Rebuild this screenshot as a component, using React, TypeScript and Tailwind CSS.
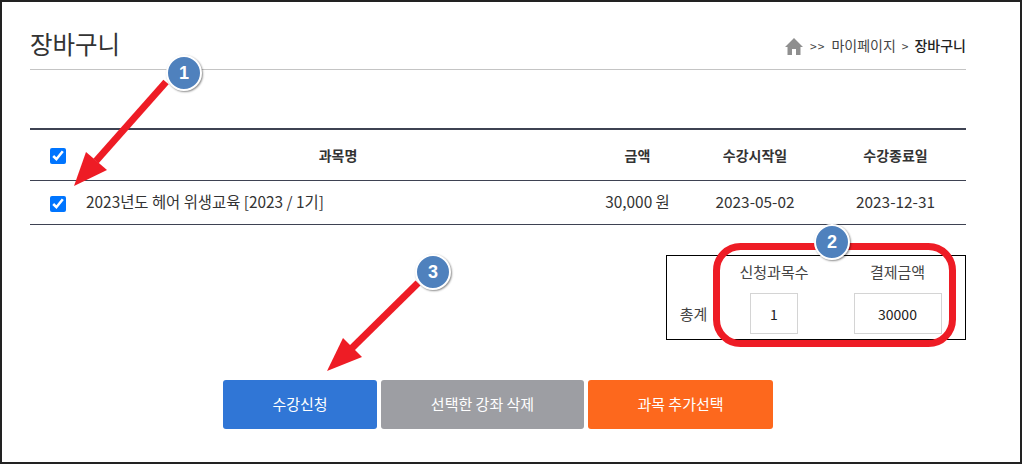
import React from 'react';

const font = '[font-family:"Noto_Sans_CJK_KR","Noto_Sans",sans-serif]';

function Callout({ n, className }: { n: number; className: string }) {
  return (
    <div
      className={`absolute flex h-[36px] w-[36px] items-center justify-center rounded-full border-2 border-white bg-[#4f81bd] text-[18px] font-bold text-white shadow-[1px_1px_2px_rgba(0,0,0,0.45)] [font-family:"Liberation_Sans",sans-serif] ${className}`}
    >
      {n}
    </div>
  );
}

function Annotations() {
  return (
    <svg className="absolute left-0 top-0" width="1022" height="464" viewBox="0 0 1022 464" fill="none">
      <line x1="166" y1="82" x2="96" y2="161" stroke="#ee1c25" strokeWidth="7" />
      <polygon points="74,186 86,152 107,170" fill="#ee1c25" />
      <line x1="418" y1="283" x2="352" y2="348" stroke="#ee1c25" strokeWidth="7" />
      <polygon points="327,371 343,338 362,357" fill="#ee1c25" />
      <rect x="716.5" y="246.5" width="236" height="97" rx="24" stroke="#ee1c25" strokeWidth="7" />
    </svg>
  );
}

function Check() {
  return (
    <input type="checkbox" defaultChecked className="h-[16px] w-[16px] accent-[#0075ff]" />
  );
}

export default function App() {
  return (
    <div className={`relative h-[464px] w-[1022px] overflow-hidden border-2 border-[#222] bg-white text-[#222] ${font}`}>
      <div className="pl-[28px] pr-[54px]">
        <div className="flex h-[68px] items-center justify-between border-b border-[#c4c4c4] pt-[14px]">
          <h1 className="pt-[4px] text-[24.5px] font-normal leading-none text-[#333]">장바구니</h1>
          <div className="flex items-center pt-[6px] text-[14px] text-[#444]">
            <svg width="18" height="17" viewBox="0 0 18 17" className="mr-[7px] mt-[2px]">
              <path d="M9 0 L18 9 H15.5 V17 H11 V11 H7 V17 H2.5 V9 H0 Z" fill="#8f8f8f" />
            </svg>
            <span className="tracking-[1px] text-[12px]">&gt;&gt;</span>
            <span className="ml-[6px]">마이페이지</span>
            <span className="ml-[6px] text-[12px]">&gt;</span>
            <span className="ml-[6px] font-medium text-[#222]">장바구니</span>
          </div>
        </div>

        <div className="mt-[58px] border-t-2 border-[#3e4252] text-[15.4px]">
          <div className="grid h-[51px] grid-cols-[56px_504px_95px_140px_141px] items-center border-b border-[#3e4252] text-center text-[14px] font-bold text-[#333]">
            <div className="mt-[2px] flex justify-center"><Check /></div>
            <div>과목명</div>
            <div>금액</div>
            <div>수강시작일</div>
            <div>수강종료일</div>
          </div>
          <div className="grid h-[44px] grid-cols-[56px_504px_95px_140px_141px] items-center border-b border-[#3e4252] pb-[2px] text-center text-[#333]">
            <div className="mt-[5px] flex justify-center"><Check /></div>
            <div className="text-left">2023년도 헤어 위생교육 [2023 / 1기]</div>
            <div>30,000 원</div>
            <div>2023-05-02</div>
            <div>2023-12-31</div>
          </div>
        </div>

        <div className="mt-[30px] flex justify-end">
          <div className="grid h-[85px] w-[300px] grid-cols-[53px_108px_139px] grid-rows-[37px_48px] border border-black text-[15px] text-[#444]">
            <div />
            <div className="flex items-center justify-center pb-[4px]">신청과목수</div>
            <div className="flex items-center justify-center pb-[4px]">결제금액</div>
            <div className="flex items-center justify-center pb-[6px]">총계</div>
            <div className="flex justify-center">
              <div className="flex h-[41px] w-[48px] items-center justify-center border border-[#d4d4d4] pt-[1px] text-[14px] text-[#222]">1</div>
            </div>
            <div className="flex justify-center">
              <div className="flex h-[41px] w-[88px] items-center justify-center border border-[#d4d4d4] pt-[1px] text-[14px] text-[#222]">30000</div>
            </div>
          </div>
        </div>

        <div className="mt-[40px] flex justify-center gap-[4px] text-[15px] text-white">
          <button className="h-[49px] w-[154px] rounded-[3px] bg-[#3076d6]">수강신청</button>
          <button className="h-[49px] w-[203px] rounded-[3px] bg-[#9d9ea3]">선택한 강좌 삭제</button>
          <button className="h-[49px] w-[185px] rounded-[3px] bg-[#fd681d]">과목 추가선택</button>
        </div>
      </div>

      <div className="absolute -left-[2px] -top-[2px] h-[464px] w-[1022px]">
        <Annotations />
        <Callout n={1} className="left-[166px] top-[55px]" />
        <Callout n={2} className="left-[814px] top-[224px]" />
        <Callout n={3} className="left-[415px] top-[254px]" />
      </div>
    </div>
  );
}
